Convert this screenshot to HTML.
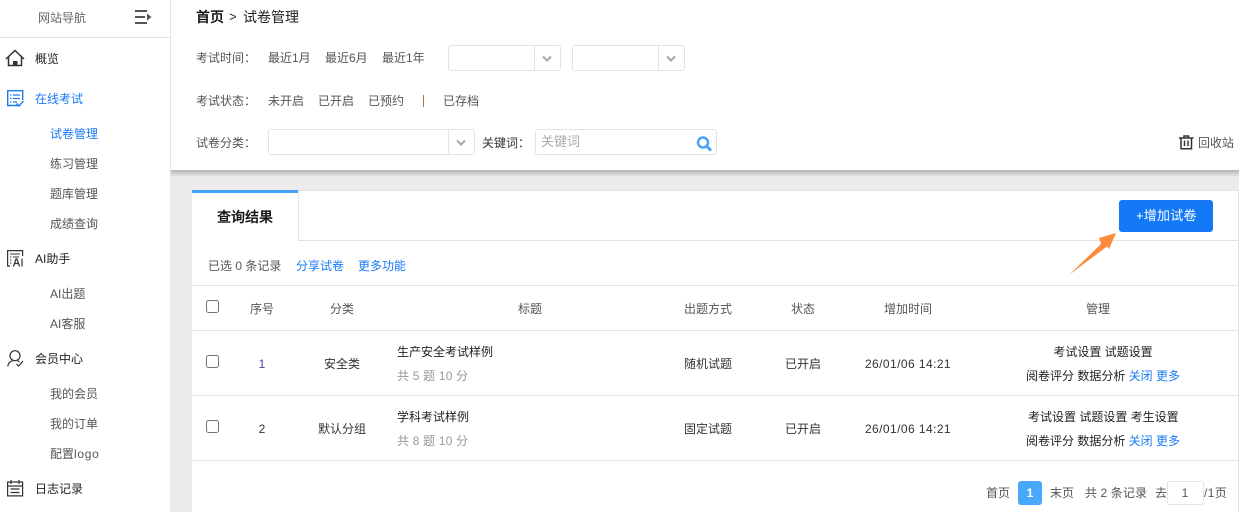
<!DOCTYPE html>
<html lang="zh-CN">
<head>
<meta charset="utf-8">
<title>试卷管理</title>
<style>
html,body{margin:0;padding:0;width:1239px;height:512px;overflow:hidden;background:#fff;}
body{position:relative;font-family:"Liberation Sans","Noto Sans CJK SC",sans-serif;font-size:12px;color:#555;}
.t{position:absolute;white-space:nowrap;line-height:16px;height:16px;}
.c{transform:translateX(-50%);}
.b{position:absolute;}
.blue{color:#1a7bf5;}
.dk{color:#333;}
.blk{color:#222;}
.d{letter-spacing:.43px;}
.d2{letter-spacing:.2px;}
.sel{position:absolute;box-sizing:border-box;height:26px;border:1px solid #e2e2e2;border-radius:3px;background:#fff;}
.sel i{position:absolute;right:25px;top:0;bottom:0;width:1px;background:#e2e2e2;}
.sel svg{position:absolute;right:7px;top:9px;}
.cb{position:absolute;box-sizing:border-box;width:13px;height:13px;border:1px solid #767676;border-radius:2.5px;background:#fff;}
svg{position:absolute;display:block;}
</style>
</head>
<body>
<!-- page bg -->
<div class="b" style="left:171px;top:170px;width:1068px;height:342px;background:#ebebeb;"></div>
<div class="b" style="left:171px;top:170px;width:1068px;height:7px;background:linear-gradient(#b4b4b4,#ebebeb);"></div>
<!-- sidebar -->
<div class="b" style="left:170px;top:0;width:1px;height:512px;background:#e6e6e6;"></div>
<div class="b" style="left:0;top:37px;width:170px;height:1px;background:#e2e2e2;"></div>
<div class="t" style="left:38px;top:10px;color:#666;">网站导航</div>
<svg style="left:135px;top:9px;" width="17" height="15" viewBox="0 0 17 15"><path d="M0 2H12M0 8H10M0 14H12" stroke="#555" stroke-width="2" fill="none"/><path d="M12 4.500L16.500 8L12 11.500Z" fill="#555"/></svg>

<svg style="left:5px;top:49px;" width="20" height="18" viewBox="0 0 20 18"><path d="M1 10L10 1.500L19 10M3.500 8V16.500H16.500V8" stroke="#333" stroke-width="1.500" fill="none"/><rect x="8" y="12" width="4.500" height="5" fill="#333"/></svg>
<div class="t blk" style="left:35px;top:51px;">概览</div>

<svg style="left:7px;top:90px;" width="17" height="17" viewBox="0 0 17 17"><path d="M11 15.500H.7V.7H15.700V10" stroke="#1a7bf5" stroke-width="1.400" fill="none"/><path d="M3 5H4.500M6 5H13M3 8.500H4.500M6 8.500H13M3 12H4.500M6 12H10" stroke="#1a7bf5" stroke-width="1.200" fill="none"/><path d="M9.500 13.500L12 16L16.500 11" stroke="#1a7bf5" stroke-width="1.400" fill="none"/></svg>
<div class="t blue" style="left:35px;top:91px;">在线考试</div>
<div class="t blue" style="left:50px;top:126px;">试卷管理</div>
<div class="t" style="left:50px;top:156px;">练习管理</div>
<div class="t" style="left:50px;top:186px;">题库管理</div>
<div class="t" style="left:50px;top:216px;">成绩查询</div>

<svg style="left:7px;top:250px;" width="17" height="17" viewBox="0 0 17 17"><path d="M.6 16.500V.6H15.600V6M.6 16H3" stroke="#333" stroke-width="1.200" fill="none"/><path d="M3 4H13M3 7H4.500M6 7H12M3 10H4.500M3 13H4.500" stroke="#333" stroke-width="1" fill="none"/><path d="M6.500 16.500L9 9H10L12.500 16.500M7.500 13.500H11.500M15 8.500V16.500" stroke="#333" stroke-width="1.200" fill="none"/></svg>
<div class="t blk" style="left:35px;top:251px;">AI助手</div>
<div class="t" style="left:50px;top:286px;">AI出题</div>
<div class="t" style="left:50px;top:316px;">AI客服</div>

<svg style="left:7px;top:350px;" width="17" height="17" viewBox="0 0 17 17"><ellipse cx="8" cy="5.700" rx="5" ry="5" stroke="#333" stroke-width="1.200" fill="none"/><path d="M.7 16.500C1 13.500 3 11.500 5.500 10.800M10.500 10.800L12.500 11.800" stroke="#333" stroke-width="1.200" fill="none"/><path d="M9.500 14L11.500 16L16 11" stroke="#333" stroke-width="1.200" fill="none"/></svg>
<div class="t blk" style="left:35px;top:351px;">会员中心</div>
<div class="t" style="left:50px;top:386px;">我的会员</div>
<div class="t" style="left:50px;top:416px;">我的订单</div>
<div class="t" style="left:50px;top:446px;">配置<span style="letter-spacing:.7px">logo</span></div>

<svg style="left:7px;top:480px;" width="17" height="17" viewBox="0 0 17 17"><path d="M.6 2H15.600V15.900H.6ZM.6 6H15.600M4 0V4M12 0V4" stroke="#333" stroke-width="1.200" fill="none"/><path d="M3.500 9H12.500M3.500 12.500H12.500" stroke="#333" stroke-width="1.200" fill="none"/></svg>
<div class="t blk" style="left:35px;top:481px;">日志记录</div>

<!-- header panel -->
<div class="b" style="left:171px;top:0;width:1068px;height:170px;background:#fff;"></div>
<div class="t" style="left:196px;top:9px;color:#111;font-size:14px;font-weight:500;-webkit-text-stroke:.2px #111;">首页</div>
<div class="t" style="left:229px;top:9px;color:#222;font-size:13px;">&gt;</div>
<div class="t" style="left:243px;top:9px;color:#222;font-size:14px;">试卷管理</div>

<div class="t" style="left:196px;top:50px;">考试时间：</div>
<div class="t" style="left:268px;top:50px;">最近1月</div>
<div class="t" style="left:325px;top:50px;">最近6月</div>
<div class="t" style="left:382px;top:50px;">最近1年</div>
<div class="sel" style="left:448px;top:45px;width:113px;"><i></i><svg width="12" height="8" viewBox="0 0 12 8"><path d="M2 1.500L6 5.500L10 1.500" stroke="#aaa" stroke-width="2.200" fill="none"/></svg></div>
<div class="sel" style="left:572px;top:45px;width:113px;"><i></i><svg width="12" height="8" viewBox="0 0 12 8"><path d="M2 1.500L6 5.500L10 1.500" stroke="#aaa" stroke-width="2.200" fill="none"/></svg></div>

<div class="t" style="left:196px;top:93px;">考试状态：</div>
<div class="t" style="left:268px;top:93px;">未开启</div>
<div class="t" style="left:318px;top:93px;">已开启</div>
<div class="t" style="left:368px;top:93px;">已预约</div>
<div class="b" style="left:423px;top:95px;width:1px;height:12px;background:#a8793f;"></div>
<div class="t" style="left:443px;top:93px;">已存档</div>

<div class="t" style="left:196px;top:135px;">试卷分类：</div>
<div class="sel" style="left:268px;top:129px;width:207px;"><i></i><svg width="12" height="8" viewBox="0 0 12 8"><path d="M2 1.500L6 5.500L10 1.500" stroke="#aaa" stroke-width="2.200" fill="none"/></svg></div>
<div class="t dk" style="left:482px;top:135px;">关键词：</div>
<div class="sel" style="left:535px;top:129px;width:182px;"></div>
<div class="t" style="left:541px;top:134px;color:#aaa;font-size:13px;">关键词</div>
<svg style="left:696px;top:136px;" width="17" height="16" viewBox="0 0 17 16"><circle cx="7" cy="6.500" r="5" stroke="#4aa3f5" stroke-width="2.500" fill="none"/><path d="M10.500 10L15 14.500" stroke="#4aa3f5" stroke-width="3" fill="none"/></svg>

<svg style="left:1179px;top:135px;" width="15" height="15" viewBox="0 0 15 15"><path d="M0 3H14.500M5 3V1H9.500V3M2 3V13.800H12.500V3M5.500 5.500V11M9 5.500V11" stroke="#333" stroke-width="1.500" fill="none"/></svg>
<div class="t" style="left:1198px;top:135px;">回收站</div>

<!-- main card -->
<div class="b" style="left:192px;top:190px;width:1047px;height:322px;background:#fff;box-sizing:border-box;border-top:1px solid #e3e3e3;border-right:1px solid #e3e3e3;"></div>
<div class="b" style="left:192px;top:190px;width:106px;height:3px;background:#44a2fa;"></div>
<div class="b" style="left:298px;top:191px;width:1px;height:50px;background:#e3e3e3;"></div>
<div class="b" style="left:299px;top:240px;width:940px;height:1px;background:#e3e3e3;"></div>
<div class="t" style="left:217px;top:209px;color:#111;font-size:14px;font-weight:500;-webkit-text-stroke:.2px #111;">查询结果</div>

<div class="b" style="left:1119px;top:200px;width:94px;height:32px;background:#1379f7;border-radius:3px;"></div>
<div class="t" style="left:1136px;top:208px;color:#fff;font-size:13px;letter-spacing:.2px;">+增加试卷</div>

<svg style="left:1065px;top:230px;" width="55" height="48" viewBox="0 0 55 48"><path d="M4 45L36 14L34 8L51 3L44 19L42 16.500Z" fill="#fb8c3c"/></svg>

<div class="t" style="left:208px;top:258px;">已选 0 条记录</div>
<div class="t blue" style="left:296px;top:258px;">分享试卷</div>
<div class="t blue" style="left:358px;top:258px;">更多功能</div>

<div class="b" style="left:192px;top:285px;width:1047px;height:1px;background:#e3e3e3;"></div>
<div class="b" style="left:192px;top:330px;width:1047px;height:1px;background:#e3e3e3;"></div>
<div class="b" style="left:192px;top:395px;width:1047px;height:1px;background:#e3e3e3;"></div>
<div class="b" style="left:192px;top:460px;width:1047px;height:1px;background:#e3e3e3;"></div>

<div class="cb" style="left:206px;top:300px;"></div>
<div class="t c" style="left:262px;top:301px;">序号</div>
<div class="t c" style="left:342px;top:301px;">分类</div>
<div class="t c" style="left:530px;top:301px;">标题</div>
<div class="t c" style="left:708px;top:301px;">出题方式</div>
<div class="t c" style="left:803px;top:301px;">状态</div>
<div class="t c" style="left:908px;top:301px;">增加时间</div>
<div class="t c" style="left:1098px;top:301px;">管理</div>

<div class="cb" style="left:206px;top:355px;"></div>
<div class="t c" style="left:262px;top:356px;color:#5b3a8c;">1</div>
<div class="t c dk" style="left:342px;top:356px;">安全类</div>
<div class="t blk" style="left:397px;top:344px;">生产安全考试样例</div>
<div class="t d2" style="left:397px;top:368px;color:#999;">共 5 题 10 分</div>
<div class="t c dk" style="left:708px;top:356px;">随机试题</div>
<div class="t c dk" style="left:803px;top:356px;">已开启</div>
<div class="t c dk d" style="left:908px;top:356px;">26/01/06 14:21</div>
<div class="t c blk" style="left:1103px;top:344px;">考试设置 试题设置</div>
<div class="t blk" style="left:1026px;top:368px;">阅卷评分 数据分析 <span class="blue">关闭 更多</span></div>

<div class="cb" style="left:206px;top:420px;"></div>
<div class="t c dk" style="left:262px;top:421px;">2</div>
<div class="t c dk" style="left:342px;top:421px;">默认分组</div>
<div class="t blk" style="left:397px;top:409px;">学科考试样例</div>
<div class="t d2" style="left:397px;top:433px;color:#999;">共 8 题 10 分</div>
<div class="t c dk" style="left:708px;top:421px;">固定试题</div>
<div class="t c dk" style="left:803px;top:421px;">已开启</div>
<div class="t c dk d" style="left:908px;top:421px;">26/01/06 14:21</div>
<div class="t blk" style="left:1028px;top:409px;">考试设置 试题设置 考生设置</div>
<div class="t blk" style="left:1026px;top:433px;">阅卷评分 数据分析 <span class="blue">关闭 更多</span></div>

<!-- pagination -->
<div class="t" style="left:986px;top:485px;">首页</div>
<div class="b" style="left:1018px;top:481px;width:24px;height:24px;background:#4aa8fb;border-radius:3px;"></div>
<div class="t c" style="left:1030px;top:485px;color:#fff;font-weight:700;">1</div>
<div class="t" style="left:1050px;top:485px;">末页</div>
<div class="t" style="left:1085px;top:485px;letter-spacing:.1px;">共 2 条记录</div>
<div class="t" style="left:1155px;top:485px;">去</div>
<div class="b" style="left:1167px;top:481px;width:37px;height:24px;box-sizing:border-box;border:1px solid #e2e2e2;border-radius:3px;background:#fff;"></div>
<div class="t c" style="left:1185px;top:485px;">1</div>
<div class="t" style="left:1204px;top:485px;letter-spacing:.4px;">/1页</div>
</body>
</html>
